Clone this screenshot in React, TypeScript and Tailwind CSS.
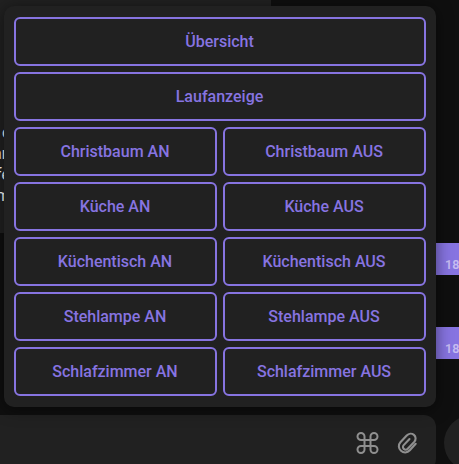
import React from "react";

const wide = ["Übersicht", "Laufanzeige"];
const rooms = ["Christbaum", "Küche", "Küchentisch", "Stehlampe", "Schlafzimmer"];

function KeyboardButton({ label, full }: { label: string; full?: boolean }) {
  return (
    <button
      className={`h-[49px] rounded-md border-2 border-[#8774e1] pr-px text-base font-medium text-[#8774e1] ${full ? "col-span-2" : ""}`}
    >
      {label}
    </button>
  );
}

function SentBubble() {
  return (
    <div className="h-8 w-[23px] bg-[#8774e1] pt-[13px] pl-[9px] text-[12.500px] leading-[18px] font-semibold text-[#c6bdf1]">
      18
    </div>
  );
}

export default function App() {
  return (
    <main className="relative flex h-[464px] w-[459px] flex-col overflow-hidden bg-[#0f0f0f] font-['Roboto',sans-serif]">
      <section className="flex h-[415px] justify-between">
        <div className="h-[233px] w-[271px] bg-[#212121] pt-[122px] text-base leading-[21px] text-white">
          <p className="ml-[2px]">c</p>
          <p className="-ml-[7px]">ar</p>
          <p className="-ml-[4px]">fe</p>
          <p className="-ml-[4px]">m</p>
        </div>
        <div className="flex flex-col gap-[52px] pt-[243px]">
          <SentBubble />
          <SentBubble />
        </div>
      </section>
      <footer className="flex h-[49px] gap-2">
        <div className="flex h-14 w-[436px] shrink-0 items-center justify-end gap-4 rounded-r-xl bg-[#212121] pr-4 text-[#8f8f8f]">
          <svg width="24" height="24" viewBox="0 0 24 24" fill="none" stroke="currentColor" strokeWidth="2">
            <path transform="translate(-0.5 0)" d="M9 9V5.500A3.500 3.500 0 1 0 5.500 9h13A3.500 3.500 0 1 0 15 5.500v13a3.500 3.500 0 1 0 3.500-3.500h-13A3.500 3.500 0 1 0 9 18.500V9" />
          </svg>
          <svg width="24" height="24" viewBox="0 0 24 24" fill="none" stroke="currentColor" strokeWidth="2.1" strokeLinecap="round">
            <path transform="translate(-0.5 0)" d="M20.200 12.800L14.300 19.300C11.800 22 8 22.100 5.500 19.800S2.500 13.800 4.900 11.200L11.200 4.500C13.300 2.300 16.300 2.100 18.400 3.900S20.700 8.700 18.700 10.900L12.200 17.700C11 18.900 9.400 18.900 8.300 17.900S7.100 15.300 8.200 14.100L14 8" />
          </svg>
        </div>
        <button className="size-14 shrink-0 rounded-full bg-[#212121]" />
      </footer>
      <section className="absolute top-[6px] left-1 grid h-[401px] w-[432px] grid-cols-2 content-start gap-[6px] rounded-[10px] bg-[#212121] px-[10px] pt-[11px] shadow-[0_2px_16px_rgba(0,0,0,0.5)]">
        {wide.map((label) => (
          <KeyboardButton key={label} label={label} full />
        ))}
        {rooms.map((room) => (
          <React.Fragment key={room}>
            <KeyboardButton label={`${room} AN`} />
            <KeyboardButton label={`${room} AUS`} />
          </React.Fragment>
        ))}
      </section>
    </main>
  );
}
